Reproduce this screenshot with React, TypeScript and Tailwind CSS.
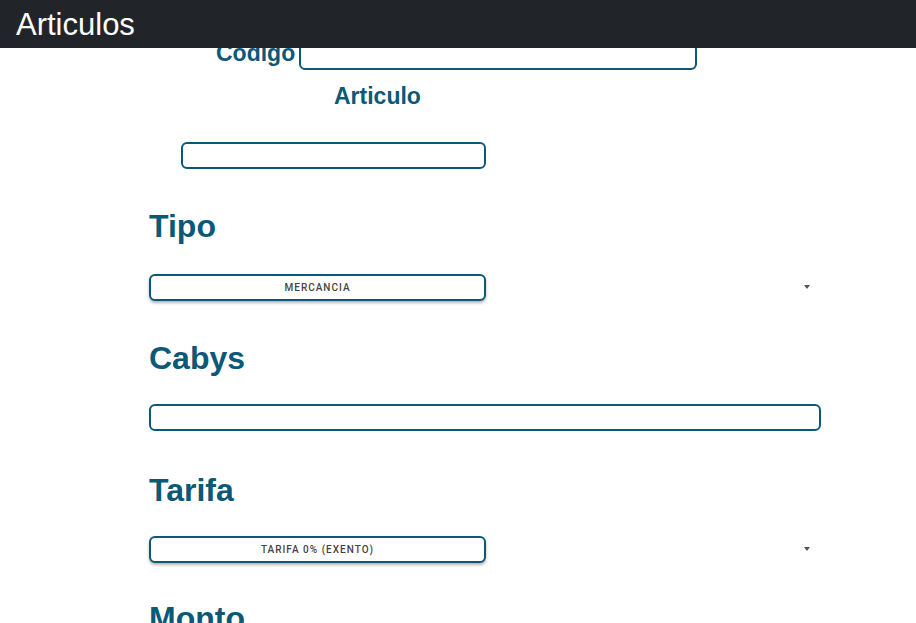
import React from 'react';

const label = 'font-bold text-[#0b5878] text-[23px] leading-none';
const heading = 'font-bold text-[#0b5878] text-[32px] leading-none';
const box = 'h-[27px] rounded-[6px] border-2 border-[#0b5878] bg-white';

// fake select: bordered box with the value, caret sits further right
const SelectBox = ({ value }: { value: string }) => (
  <div className="relative w-[672px] h-[27px]">
    <div className={`${box} w-[337px] flex items-center justify-center shadow-[0_2px_3px_rgba(0,0,0,0.3)]`}>
      <span className="text-[10px] tracking-[0.1em] text-[#444] font-medium" style={{ fontFamily: 'Roboto, sans-serif' }}>
        {value}
      </span>
    </div>
    <span className="absolute left-[655px] top-[11px] w-0 h-0 border-l-[3px] border-r-[3px] border-t-[4px] border-l-transparent border-r-transparent border-t-[#555]" />
  </div>
);

export default function App() {
  return (
    <div className="h-[623px] bg-white overflow-hidden" style={{ fontFamily: '"Liberation Sans", Arial, sans-serif' }}>
      {/* fixed navbar overlays the scrolled content */}
      <div className="fixed top-0 left-0 right-0 h-[48px] bg-[#212529] flex items-center px-4 z-10">
        <span className="text-white text-[31px] leading-none">Articulos</span>
      </div>

      <div className="pt-[42px] pl-[149px]">
        <div className="flex items-end">
          <span className={`${label} ml-[67px] mr-[4px] mb-[5px]`}>Codigo</span>
          <div className={`${box} w-[398px] h-[26px]`} />
        </div>
        <div className={`${label} ml-[185px] mt-[15px]`}>Articulo</div>
        <div className={`${box} w-[305px] ml-[32px] mt-[34px]`} />

        <h1 className={`${heading} mt-[41px]`}>Tipo</h1>
        <div className="mt-[32px]">
          <SelectBox value="MERCANCIA" />
        </div>

        <h1 className={`${heading} mt-[41px]`}>Cabys</h1>
        <div className={`${box} w-[672px] mt-[30px]`} />

        <h1 className={`${heading} mt-[43px]`}>Tarifa</h1>
        <div className="mt-[30px]">
          <SelectBox value="TARIFA 0% (EXENTO)" />
        </div>

        <h1 className={`${heading} mt-[39px]`}>Monto</h1>
      </div>
    </div>
  );
}
